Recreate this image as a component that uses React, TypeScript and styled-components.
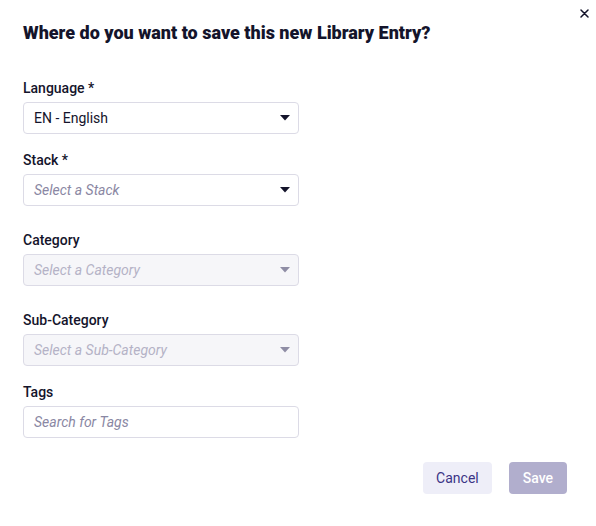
import styled, { createGlobalStyle } from 'styled-components';

const GlobalStyle = createGlobalStyle`
  html, body {
    margin: 0;
    padding: 0;
    background: #ffffff;
    font-family: Roboto, 'Liberation Sans', sans-serif;
    -webkit-font-smoothing: antialiased;
  }
`;

const Dialog = styled.div`
  position: relative;
  width: 596px;
  height: 526px;
  box-sizing: border-box;
  padding: 21px 29px 0 23px;
  background: #ffffff;
  display: flex;
  flex-direction: column;
`;

const CloseButton = styled.button`
  position: absolute;
  top: 7px;
  right: 6px;
  width: 12px;
  height: 12px;
  padding: 0;
  border: 0;
  background: none;
  display: flex;
  align-items: center;
  justify-content: center;
  cursor: pointer;
`;

const Title = styled.h2`
  margin: 0 0 33px;
  font-size: 18px;
  line-height: 24px;
  font-weight: 900;
  color: #14142b;
`;

const Field = styled.div<{ $extra?: boolean }>`
  display: flex;
  flex-direction: column;
  gap: 4px;
  width: 276px;
  margin-bottom: ${(p) => (p.$extra ? '24px' : '16px')};
`;

const Label = styled.label`
  font-size: 14px;
  line-height: 20px;
  font-weight: 500;
  color: #14142b;
`;

const Box = styled.div<{ $disabled?: boolean }>`
  height: 32px;
  box-sizing: border-box;
  border: 1px solid #dcdbe6;
  border-radius: 4px;
  background: ${(p) => (p.$disabled ? '#f6f6f9' : '#ffffff')};
  display: flex;
  align-items: center;
  justify-content: space-between;
  padding: 0 8px 0 10px;
`;

const Value = styled.span<{ $placeholder?: boolean; $disabled?: boolean }>`
  font-size: 14px;
  line-height: 20px;
  color: ${(p) => (p.$disabled ? '#b4b2c6' : p.$placeholder ? '#8a87a3' : '#14142b')};
  font-style: ${(p) => (p.$placeholder ? 'italic' : 'normal')};
`;

const Footer = styled.div`
  display: flex;
  justify-content: flex-end;
  gap: 17px;
  margin-top: 8px;
`;

const Button = styled.button<{ $primary?: boolean }>`
  height: 32px;
  border: 0;
  border-radius: 4px;
  font-family: inherit;
  font-size: 14px;
  font-weight: ${(p) => (p.$primary ? 500 : 400)};
  padding: 0 ${(p) => (p.$primary ? '14px' : '13px')};
  background: ${(p) => (p.$primary ? '#b1aecd' : '#eeeef8')};
  color: ${(p) => (p.$primary ? '#ffffff' : '#3b3486')};
`;

function Caret({ disabled }: { disabled?: boolean }) {
  return (
    <svg width="10" height="6" viewBox="0 0 10 6">
      <path d="M0 0H10L5 5.5Z" fill={disabled ? '#8f8da5' : '#14142b'} />
    </svg>
  );
}

interface SelectProps {
  label: string;
  value: string;
  placeholder?: boolean;
  disabled?: boolean;
  extra?: boolean;
  caret?: boolean;
}

function SelectField({ label, value, placeholder, disabled, extra, caret = true }: SelectProps) {
  return (
    <Field $extra={extra}>
      <Label>{label}</Label>
      <Box $disabled={disabled}>
        <Value $placeholder={placeholder} $disabled={disabled}>{value}</Value>
        {caret && <Caret disabled={disabled} />}
      </Box>
    </Field>
  );
}

export default function App() {
  return (
    <>
      <GlobalStyle />
      <Dialog>
        <CloseButton aria-label="Close">
          <svg width="9" height="9" viewBox="0 0 9 9">
            <path d="M1 1L8 8M8 1L1 8" stroke="#14142b" strokeWidth="1.5" strokeLinecap="round" />
          </svg>
        </CloseButton>
        <Title>Where do you want to save this new Library Entry?</Title>
        <SelectField label="Language *" value="EN - English" />
        <SelectField label="Stack *" value="Select a Stack" placeholder extra />
        <SelectField label="Category" value="Select a Category" placeholder disabled extra />
        <SelectField label="Sub-Category" value="Select a Sub-Category" placeholder disabled />
        <SelectField label="Tags" value="Search for Tags" placeholder caret={false} />
        <Footer>
          <Button>Cancel</Button>
          <Button $primary>Save</Button>
        </Footer>
      </Dialog>
    </>
  );
}
